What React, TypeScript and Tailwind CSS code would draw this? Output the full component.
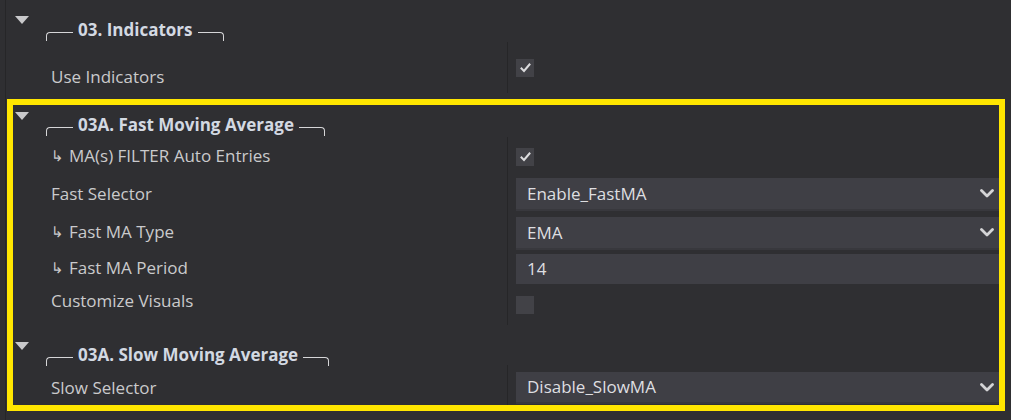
import React from "react";

const Triangle = () => (
  <svg width="14" height="8" viewBox="0 0 14 8" className="block">
    <path d="M0 0 H14 L7 8 Z" fill="#c9c9cb" />
  </svg>
);

const Chevron = () => (
  <svg width="14" height="9" viewBox="0 0 14 9" className="block">
    <path d="M1.5 1.5 L7 7 L12.5 1.5" fill="none" stroke="#d4d4d6" strokeWidth="2.8" strokeLinecap="round" strokeLinejoin="round" />
  </svg>
);

const Check = () => (
  <svg width="11" height="10" viewBox="0 0 11 10" className="block">
    <path d="M1.5 5.5 L4 8 L9.5 1.5" fill="none" stroke="#dcdcde" strokeWidth="2" strokeLinecap="square" strokeLinejoin="miter" />
  </svg>
);

function Header({ title, h, textTop, lineTop, leftW, rightW }: { title: string; h: string; textTop: string; lineTop: string; leftW: string; rightW: string }) {
  return (
    <div className={`flex ${h}`}>
      <div className="w-[40px] pl-[9px] pt-[16px] shrink-0">
        <Triangle />
      </div>
      <div className={`flex items-start ${textTop}`}>
        <span className={`${lineTop} ${leftW} h-[9px] border-t border-l border-[#d6d6d8] rounded-tl-[4px] shrink-0`} />
        <span className="ml-[5px] text-[17px] leading-[22px] font-bold text-[#d3d9e2] whitespace-nowrap">{title}</span>
        <span className={`${lineTop} ml-[5px] ${rightW} h-[9px] border-t border-r border-[#d6d6d8] rounded-tr-[4px] shrink-0`} />
      </div>
    </div>
  );
}

function Row({ h, labelPt, valuePt, label, sub, children }: { h: string; labelPt: string; valuePt: string; label: string; sub?: boolean; children: React.ReactNode }) {
  return (
    <div className={`flex ${h}`}>
      <div className={`w-[501px] shrink-0 pl-[45px] ${labelPt}`}>
        <div className="h-[20px] text-[17px] leading-[20px] text-[#cacacc] whitespace-nowrap flex items-center">
          {sub && <span className="w-[18px] h-[20px] shrink-0 text-[15px] text-[#cacacc] font-['DejaVu_Sans',sans-serif] leading-[20px]">↳</span>}
          <span>{label}</span>
        </div>
      </div>
      <div className={`border-l border-[#262628] pl-[8px] w-[494px] shrink-0 ${valuePt}`}>{children}</div>
    </div>
  );
}

const CheckBox = ({ checked }: { checked: boolean }) => (
  <div className="w-[18px] h-[18px] bg-[#424247] flex items-center justify-center">{checked && <Check />}</div>
);

const Select = ({ value, h }: { value: string; h: string }) => (
  <div className={`${h} bg-[#3f3f45] border-b-2 border-[#38383d] flex items-center justify-between pl-[11px] pr-[7px]`}>
    <span className="text-[17px] text-[#dedee0]">{value}</span>
    <Chevron />
  </div>
);

const Input = ({ value }: { value: string }) => (
  <div className="h-[30px] bg-[#3f3f45] flex items-center pl-[11px]">
    <span className="text-[17px] text-[#dedee0]">{value}</span>
  </div>
);

export default function App() {
  return (
    <div className="relative w-[1011px] h-[420px] bg-[#2f2f32] overflow-hidden font-['Open_Sans',sans-serif]">
      <div className="ml-[5px] h-full border-l border-[#262628]">
        {/* Section 1 */}
        <Header title="03. Indicators" h="h-[42px]" textTop="pt-[19px]" lineTop="mt-[13px]" leftW="w-[27px]" rightW="w-[26px]" />
        <Row h="h-[51px]" labelPt="pt-[25px]" valuePt="pt-[17px]" label="Use Indicators">
          <CheckBox checked />
        </Row>
        <div className="h-[3px]" />
        {/* Section 2 */}
        <Header title="03A. Fast Moving Average" h="h-[41px]" textTop="pt-[18px]" lineTop="mt-[13px]" leftW="w-[27px]" rightW="w-[26px]" />
        <Row h="h-[37px]" labelPt="pt-[9px]" valuePt="pt-[11px]" label="MA(s) FILTER Auto Entries" sub>
          <CheckBox checked />
        </Row>
        <Row h="h-[40px]" labelPt="pt-[10px]" valuePt="pt-[4px]" label="Fast Selector">
          <Select value="Enable_FastMA" h="h-[33px]" />
        </Row>
        <Row h="h-[38px]" labelPt="pt-[8px]" valuePt="pt-[3px]" label="Fast MA Type" sub>
          <Select value="EMA" h="h-[33px]" />
        </Row>
        <Row h="h-[34px]" labelPt="pt-[6px]" valuePt="pt-[2px]" label="Fast MA Period" sub>
          <Input value="14" />
        </Row>
        <Row h="h-[39px]" labelPt="pt-[5px]" valuePt="pt-[10px]" label="Customize Visuals">
          <CheckBox checked={false} />
        </Row>
        <div className="h-[1px]" />
        {/* Section 3 */}
        <Header title="03A. Slow Moving Average" h="h-[39px]" textTop="pt-[18px]" lineTop="mt-[13px]" leftW="w-[27px]" rightW="w-[26px]" />
        <Row h="h-[40px]" labelPt="pt-[13px]" valuePt="pt-[7px]" label="Slow Selector">
          <Select value="Disable_SlowMA" h="h-[32px]" />
        </Row>
      </div>
      {/* highlight overlay */}
      <div className="pointer-events-none absolute left-[7px] top-[99px] w-[998px] h-[312px] border-[6px] border-[#ffe600]" />
    </div>
  );
}
